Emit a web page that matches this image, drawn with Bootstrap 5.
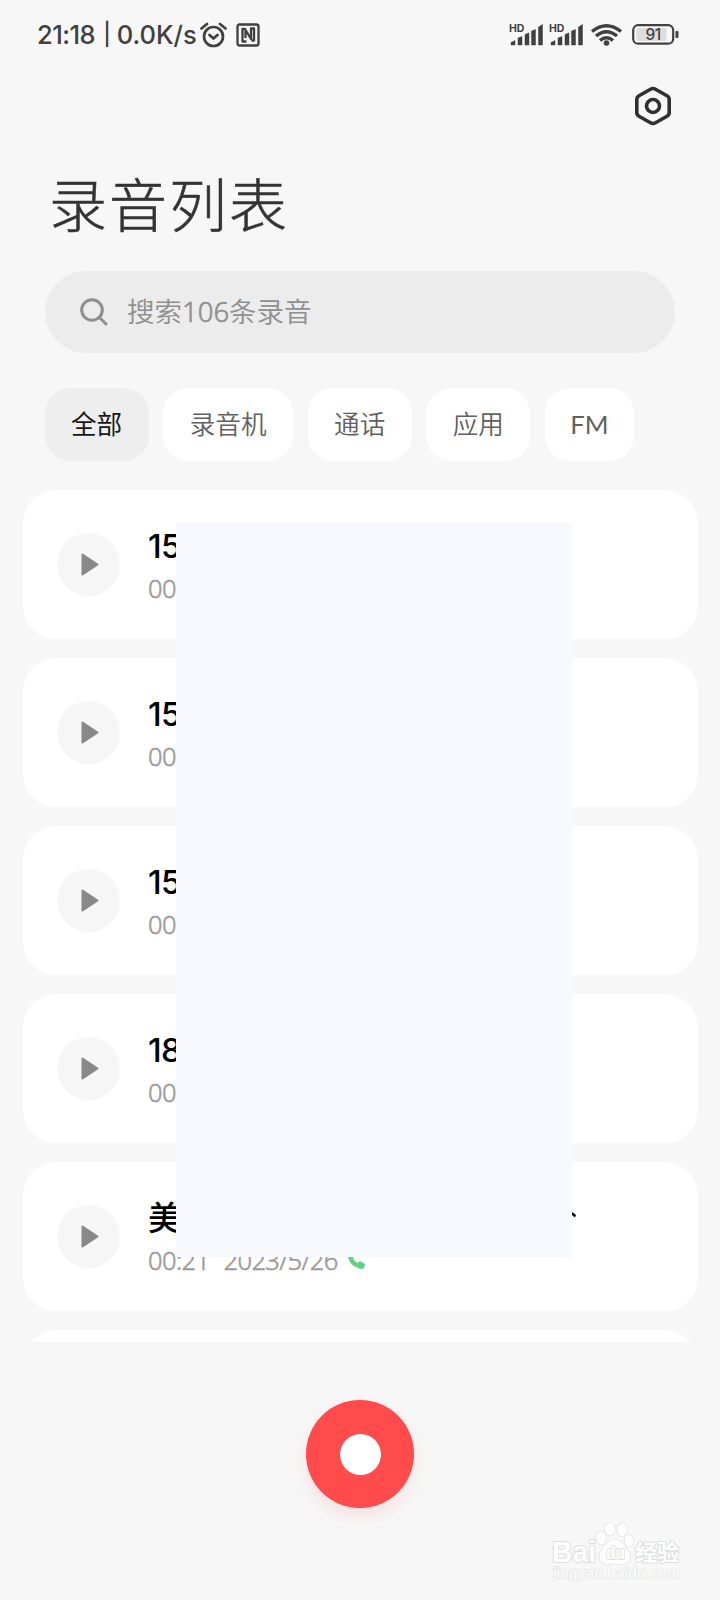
<!DOCTYPE html>
<html lang="zh-CN">
<head>
<meta charset="utf-8">
<meta name="viewport" content="width=device-width, initial-scale=1">
<title>录音列表</title>
<link href="https://cdn.jsdelivr.net/npm/bootstrap@5.3.0/dist/css/bootstrap.min.css" rel="stylesheet">
<style>
body{background:#f7f7f7;font-family:Lato,"Noto Sans CJK SC",sans-serif;color:#333}
.phone{width:720px;height:1600px}
.status{height:70px;padding:0 41px 0 37px;font:450 25.5px/1 Inter,"Noto Sans",sans-serif;color:#404040}
.toolbar{height:71px;padding:0 47px 0 0}
.page-title{height:130px;padding:0 0 0 49px;font:300 58px/122px "Noto Sans CJK SC",sans-serif;letter-spacing:2px;color:#333;-webkit-text-stroke:.5px #333}
.search{height:82px;margin:0 45px;border-radius:41px;background:#ececec;color:#8f8f8f;font:350 27.5px/1 "Noto Sans","Noto Sans CJK SC",sans-serif;padding:0 34px;gap:18px}
.search b{font-weight:300;-webkit-text-stroke:.6px #8f8f8f}
.chips{margin:35px 44.5px 0;gap:14.6px}
.chip{height:73px;border-radius:25px;background:#fff;color:#606060;font-size:25.6px;font-weight:350;border:0}
.chip.on{background:#eee;color:#181818;font-weight:400}
.chip:last-child{font-weight:400}
.records{height:852px;margin-top:29px;padding:0 22.5px;gap:19px}
.rec{height:149px;border-radius:33px;border:0;background:#fff;padding:0 34px;gap:28.5px}
.play{width:63px;height:63px;background:#f6f6f6}
.rname{font:500 33px/40px Inter,"Noto Sans CJK SC",sans-serif;letter-spacing:-.8px;color:#000;height:40px}
.rmeta{font:300 25.5px/30px "Noto Sans",sans-serif;letter-spacing:-.6px;color:#999;height:30px;margin-top:7px;-webkit-text-stroke:.5px #999}
.mask{left:176px;top:523px;width:396px;height:734px;background:#f8f9fe}
.tip{left:572px;top:1211px}
.rec-btn{width:108px;height:108px;background:#ff4b4b;box-shadow:0 9px 18px rgba(255,75,75,.13)}
.rec-btn i{width:41px;height:41px}
.brand{left:546px;top:1516px}
</style>
</head>
<body>
<div class="phone position-relative overflow-hidden">
  <header class="status d-flex align-items-center">
    <span style="letter-spacing:-.5px">21:18</span><span style="margin:-3px 6px 0 8px;font-size:22px">|</span><span style="letter-spacing:0">0.0K/s</span>
    <svg style="margin-left:3px" width="27" height="26" viewBox="0 0 27 26" fill="none" stroke="#404040" stroke-width="2.7" stroke-linecap="round"><circle cx="13.5" cy="14.5" r="9.5"/><path d="M1.5 6.5 7 2M20 2l5.500 4.500M9.500 13l4 3.500 4-3.500"/></svg>
    <svg style="margin-left:9px" width="24" height="24" viewBox="0 0 24 24" fill="none" stroke="#404040" stroke-width="2.3" stroke-linejoin="round"><rect x="1.500" y="1.500" width="21" height="21" rx="2"/><path d="M10.500 18.500H6.500V6H9l6 10V5.500h3v12h-2.500M9.500 8v7"/></svg>
    <svg class="ms-auto" style="margin-top:1px" width="170" height="26" viewBox="0 0 170 26" fill="#404040">
      <g id="sig"><text x="0" y="9" font-family="Inter" font-size="10.500" font-weight="700">HD</text><path d="M2 22v-2.500l4-2V22zM9 22v-7l4-1.500V22zM16 22V11.500l4-1.500v12zM22.500 22V8l4-1.500V22zM29.500 22V4l4-2.500V22z" stroke="#404040" stroke-width=".5" stroke-linejoin="round"/></g>
      <use href="#sig" x="40"/>
      <g fill="none" stroke="#404040" stroke-width="3.500"><path d="M83 8.500Q97.500-3 112 8.500"/><path d="M87 13Q97.500 4.500 108 13"/><path d="M91 17.500Q97.500 12 104 17.500"/></g><circle cx="97.500" cy="20" r="2.800"/>
      <rect x="124.200" y="2.200" width="40" height="18.500" rx="5" fill="none" stroke="#404040" stroke-width="2.200"/><rect x="127.500" y="5" width="30" height="13" rx="2" fill="#ddd"/><rect x="166.500" y="8" width="3" height="7" rx="1"/><text x="144" y="17.300" text-anchor="middle" font-family="Inter" font-size="15.500" font-weight="500" letter-spacing="-.5">91</text>
    </svg>
  </header>
  <div class="toolbar d-flex justify-content-end align-items-center">
    <svg width="40" height="40" viewBox="0 0 40 40" fill="none" stroke="#303030" stroke-width="3.600" stroke-linejoin="round"><path d="M17.500 3.200Q20 1.800 22.500 3.200L34 9.700Q36.200 11 36.200 13.500v13Q36.200 29 34 30.300L22.500 36.800Q20 38.200 17.500 36.800L6 30.300Q3.800 29 3.800 26.500v-13Q3.800 11 6 9.700Z"/><circle cx="20" cy="20" r="6.500"/></svg>
  </div>
  <h1 class="page-title m-0">录音列表</h1>
  <div class="search d-flex align-items-center">
    <svg width="30" height="30" viewBox="0 0 30 30" fill="none" stroke="#8f8f8f" stroke-width="3" stroke-linecap="round"><circle cx="13" cy="13" r="10.300"/><path d="m20.500 20.500 6.500 6.500"/></svg>
    <span>搜索<b>106</b>条录音</span>
  </div>
  <nav class="chips d-flex">
    <button class="chip on" style="width:104px">全部</button><button class="chip" style="width:130px">录音机</button><button class="chip" style="width:104px">通话</button><button class="chip" style="width:104px">应用</button><button class="chip" style="width:89px">FM</button>
  </nav>
  <main class="records d-flex flex-column overflow-hidden" id="records"></main>
  <div class="mask position-absolute"></div>
  <svg class="tip position-absolute" width="6" height="8" viewBox="0 0 6 8"><path d="M0 1 3.500 3.500 4 5 2.500 6.300 0 4z"/></svg>
  <footer class="d-flex justify-content-center" style="padding-top:58px">
    <button class="rec-btn rounded-circle border-0 d-flex justify-content-center align-items-center p-0" aria-label="录音"><i class="bg-white rounded-circle"></i></button>
  </footer>
  <svg class="brand position-absolute" width="150" height="70" viewBox="0 0 150 70" fill="#fff" stroke="#dedede" stroke-width="2" paint-order="stroke" stroke-linejoin="round" font-family="Liberation Sans" font-weight="700">
    <text x="6" y="46" font-size="29" textLength="44" lengthAdjust="spacingAndGlyphs">Bai</text>
    <g stroke-width="1.200"><ellipse cx="55" cy="22" rx="5" ry="6.500"/><ellipse cx="64" cy="13" rx="5" ry="6.500"/><ellipse cx="76" cy="14" rx="5" ry="6.500"/><ellipse cx="83" cy="25" rx="4.500" ry="6"/><path d="M69 24c8 0 9 7 13 11 5 6 1 13-6 13-5 0-9-1-14 0-8 0-11-7-7-13 4-5 6-11 14-11Z"/></g>
    <text x="60" y="43" font-size="19" textLength="19" lengthAdjust="spacingAndGlyphs" fill="#fff" stroke-width="2">du</text>
    <text x="89" y="44" font-size="22" font-family="Noto Sans CJK SC">经验</text>
    <text x="7" y="62" font-size="14" font-weight="400" stroke="#e6e6e6" stroke-width="1.500" textLength="127" lengthAdjust="spacingAndGlyphs">jingyan.baidu.com</text>
  </svg>
</div>
<script>
const phone='<svg style="margin-left:9px" width="18" height="20" viewBox="0 0 18 20" fill="#5fd384"><path d="M1.500 2.500 5 1l3 5-2 2.500q1.500 3 4.500 4.500L13 11l5 3-1 4q-2 1.500-5 .5Q2 15 .5 5.500 0 3.500 1.500 2.500Z"/></svg>';
const rows=[['15','00'],['15','00'],['15','00'],['18','00'],['美','<span>00:21</span><span style="margin-left:14px">2023/5/26</span>'+phone],['','']];
document.getElementById('records').innerHTML=rows.map(r=>`<article class="rec d-flex flex-shrink-0 align-items-center"><span class="play rounded-circle d-flex align-items-center justify-content-center flex-shrink-0"><svg width="20" height="24" viewBox="0 0 20 24" style="margin-left:4px"><path d="M2.500 1.500 17.500 11.500 2.500 21.500Z" fill="#888" stroke="#888" stroke-width="2" stroke-linejoin="round"/></svg></span><div><div class="rname">${r[0]}</div><div class="rmeta d-flex align-items-center">${r[1]}</div></div></article>`).join('');
</script>
<script src="https://cdn.jsdelivr.net/npm/bootstrap@5.3.0/dist/js/bootstrap.bundle.min.js"></script>
</body>
</html>
